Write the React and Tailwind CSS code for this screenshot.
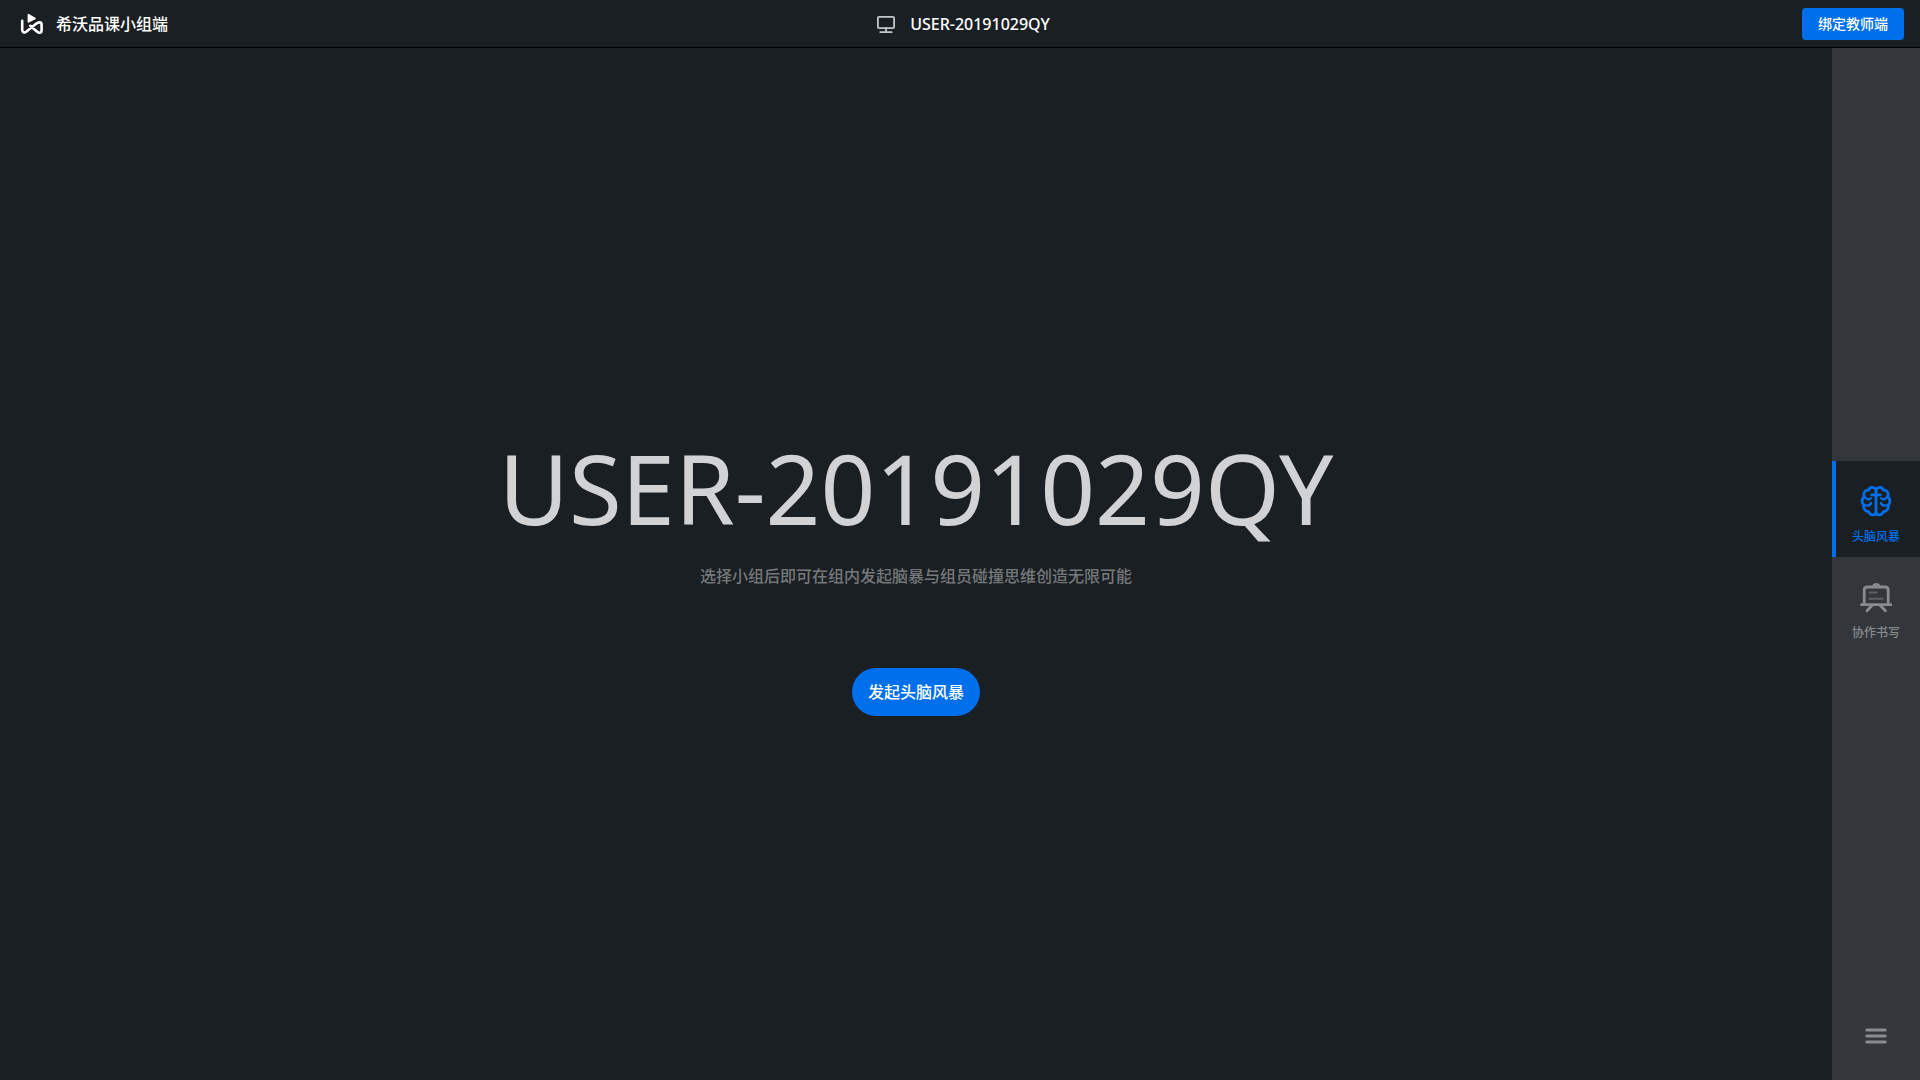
import React, { useState } from 'react';

const LogoIcon = () => (
  <svg className="w-6 h-6" viewBox="0 0 24 24" fill="none" aria-hidden="true">
    <path d="M8.5 2.8v7l6.4-3.3z" fill="white" stroke="white" strokeWidth="1.8" strokeLinejoin="round" />
    <path
      d="M2.2 8.8v9c0 2.6 2 3.4 4 2l9.6-7.8c2.8-2.2 5.8-2.4 5.8.8v5.6c0 2.8-2.4 3-4.4 1.4l-7-6"
      stroke="white"
      strokeWidth="2.6"
      strokeLinecap="round"
      strokeLinejoin="round"
    />
  </svg>
);

const MonitorIcon = () => (
  <svg className="w-5 h-5" viewBox="0 0 20 20" fill="none" stroke="#c4c6c7" strokeWidth="1.8" strokeLinecap="round" aria-hidden="true">
    <rect x="1.9" y="2.9" width="16.2" height="11.2" rx="1.2" />
    <path d="M10 14v4M4.2 18.1h11.6" />
  </svg>
);

const BrainIcon = () => (
  <svg className="w-8 h-8" viewBox="0 0 32 32" fill="none" stroke="currentColor" strokeWidth="2.8" strokeLinecap="round" strokeLinejoin="round" aria-hidden="true">
    <path d="M16 4.4C14 1.6 9.6 1.8 8.4 5.2C4.6 5 2.8 9 4.6 11.8C1.4 13.4 1.4 18 3.8 19.8C3 23.6 5 26.4 8.4 26.6C9.8 30.4 14.4 31 16 28" />
    <path d="M16 4.4C18 1.6 22.4 1.8 23.6 5.2C27.4 5 29.2 9 27.4 11.8C30.6 13.4 30.6 18 28.2 19.8C29 23.6 27 26.4 23.6 26.6C22.2 30.4 17.6 31 16 28" />
    <path d="M16 5V28M11.6 9.8C13.4 9.8 16 9.4 16 12.4M20.4 9.8C18.6 9.8 16 9.4 16 12.4" />
    <path d="M5 12.4C6.6 14.6 9.4 14.8 10.8 13.2M27 12.4C25.4 14.6 22.6 14.8 21.2 13.2M4.4 20C7 21.2 10.6 20.8 10.8 18M27.6 20C25 21.2 21.4 20.8 21.2 18" strokeWidth="2.4" />
  </svg>
);

const BoardIcon = () => (
  <svg className="w-8 h-8" viewBox="0 0 32 32" fill="none" stroke="currentColor" strokeWidth="2.8" strokeLinecap="round" strokeLinejoin="round" aria-hidden="true">
    <path d="M4.2 23V9.2C4.2 7.2 5.4 6 7.4 6H25C27 6 28.2 7.2 28.2 9.2V23" />
    <path d="M13.6 5.8C13.6 2.6 18.8 2.6 18.8 5.8" />
    <path d="M1.4 23.7H30.8M12 24.5L7 29.8M20.4 24.5L25.4 29.8" />
    <path d="M9.5 11.5H16.5M9.5 17.7H22.5" strokeWidth="2" opacity="0.5" />
  </svg>
);

const MenuIcon = () => (
  <svg className="w-6 h-6" viewBox="0 0 24 24" stroke="currentColor" strokeWidth="3" strokeLinecap="round" aria-hidden="true">
    <path d="M2.8 6h18.4M2.8 12h18.4M2.8 18h18.4" />
  </svg>
);

const tools = [
  { id: 'brainstorm', label: '头脑风暴', Icon: BrainIcon },
  { id: 'writing', label: '协作书写', Icon: BoardIcon },
];

const deviceName = 'USER-20191029QY';

const App = () => {
  const [activeTool, setActiveTool] = useState('brainstorm');

  return (
    <div className="flex flex-col min-h-screen bg-[#1a1f23] text-white font-['Noto_Sans','Noto_Sans_CJK_SC',sans-serif]">
      {/* Top bar */}
      <header className="grid grid-cols-[1fr_auto_1fr] items-center h-12 px-4 border-b border-black">
        <div className="flex items-center gap-3 pl-1">
          <LogoIcon />
          <span className="text-base font-medium">希沃品课小组端</span>
        </div>
        <div className="flex items-center gap-3.5 pl-1.5">
          <MonitorIcon />
          <span className="text-base font-medium">{deviceName}</span>
        </div>
        <button type="button" className="justify-self-end h-8 px-4 rounded bg-[#006fec] text-sm font-medium">
          绑定教师端
        </button>
      </header>

      <div className="flex flex-1">
        {/* Stage */}
        <main className="flex flex-1 flex-col items-center justify-center pt-7">
          <h1 className="text-8xl leading-none text-[#d1d2d3]">{deviceName}</h1>
          <p className="mt-7 text-base font-medium text-[#75787b]">选择小组后即可在组内发起脑暴与组员碰撞思维创造无限可能</p>
          <button type="button" className="mt-20 h-12 px-4 rounded-full bg-[#006fec] text-base font-medium">
            发起头脑风暴
          </button>
        </main>

        {/* Tool sidebar */}
        <aside className="flex flex-col w-22 bg-[#33373c]">
          <div className="flex-1" />
          <nav className="flex flex-col">
            {tools.map(({ id, label, Icon }) => (
              <button
                key={id}
                type="button"
                onClick={() => setActiveTool(id)}
                className={`flex flex-col items-center justify-center gap-3 h-24 border-l-4 pt-3 pr-1 text-xs font-medium ${
                  activeTool === id
                    ? 'bg-[#1a1f23] border-[#006fec] text-[#006fec]'
                    : 'border-transparent text-[#898b8e]'
                }`}
              >
                <Icon />
                <span>{label}</span>
              </button>
            ))}
          </nav>
          <div className="flex flex-1 flex-col items-center justify-end pb-3.5">
            <button type="button" aria-label="菜单" className="mb-4.5 text-[#898b8e]">
              <MenuIcon />
            </button>
          </div>
        </aside>
      </div>
    </div>
  );
};

export default App;
